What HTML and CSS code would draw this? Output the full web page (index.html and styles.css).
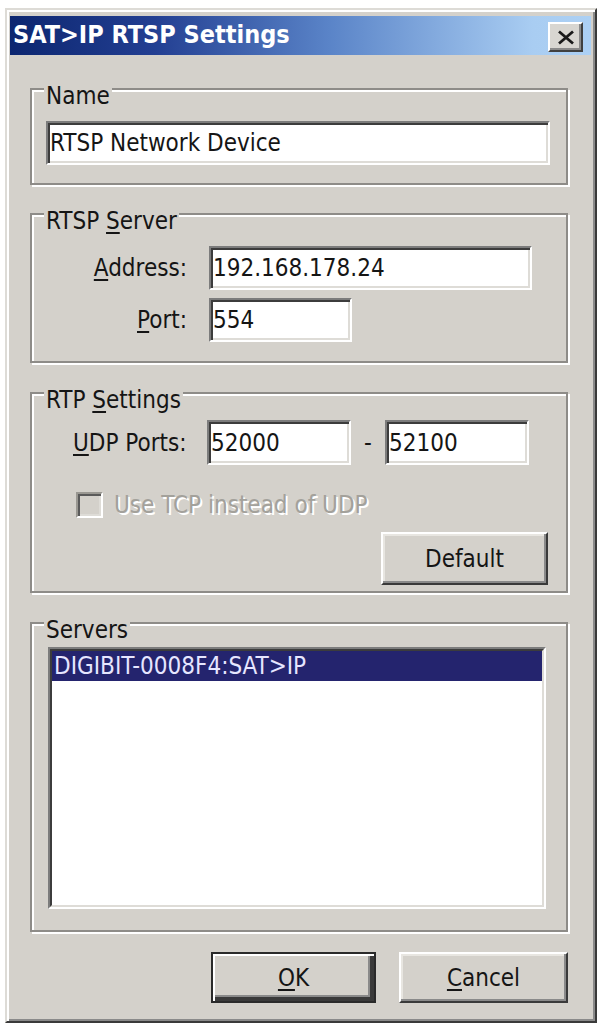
FILE: index.html
```html
<!DOCTYPE html>
<html>
<head>
<meta charset="utf-8">
<title>SAT&gt;IP RTSP Settings</title>
<link rel="stylesheet" href="styles.css">
</head>
<body>
<div class="window">
  <div class="titlebar">
    <span class="title-text">SAT&gt;IP RTSP Settings</span>
    <button class="close" aria-label="Close">
      <svg width="18" height="15" viewBox="0 0 18 15"><path d="M2 1.5 L16 13.5 M16 1.5 L2 13.5" stroke="#1a1a1a" stroke-width="2.8" fill="none"/></svg>
    </button>
  </div>
  <div class="content">
    <fieldset class="group g-name">
      <legend>Name</legend>
      <input class="field f-name" type="text" value="RTSP Network Device">
    </fieldset>

    <fieldset class="group g-server">
      <legend>RTSP <u>S</u>erver</legend>
      <div class="row">
        <label class="lbl-right"><u>A</u>ddress:</label>
        <input class="field f-addr" type="text" value="192.168.178.24">
      </div>
      <div class="row row-port">
        <label class="lbl-right"><u>P</u>ort:</label>
        <input class="field f-port" type="text" value="554">
      </div>
    </fieldset>

    <fieldset class="group g-rtp">
      <legend>RTP <u>S</u>ettings</legend>
      <div class="row row-udp">
        <label class="lbl-udp"><u>U</u>DP Ports:</label>
        <input class="field f-udp" type="text" value="52000">
        <span class="dash">-</span>
        <input class="field f-udp" type="text" value="52100">
      </div>
      <div class="row row-check">
        <span class="checkbox"></span>
        <span class="check-label">Use TCP instead of UDP</span>
      </div>
      <div class="row row-default">
        <button class="btn btn-default">Default</button>
      </div>
    </fieldset>

    <fieldset class="group g-servers">
      <legend>Servers</legend>
      <div class="list">
        <div class="list-inner">
          <div class="list-item selected">DIGIBIT-0008F4:SAT&gt;IP</div>
        </div>
      </div>
    </fieldset>

    <div class="buttons">
      <button class="btn btn-ok"><u>O</u>K</button>
      <button class="btn btn-cancel"><u>C</u>ancel</button>
    </div>
  </div>
</div>
</body>
</html>
```

FILE: styles.css
```css
* { box-sizing: border-box; }
html, body { margin: 0; padding: 0; background: #ffffff; }
body {
  font-family: "DejaVu Sans Condensed", "DejaVu Sans", sans-serif;
  font-size: 24px;
  line-height: 26px;
  color: #151515;
}
u { text-decoration-thickness: 2px; text-underline-offset: 3px; }

.window {
  width: 592px;
  height: 1015px;
  margin: 8px 0 0 5px;
  background: #d4d1cb;
  border: 2px solid;
  border-color: #dddbd6 #3a3a3a #3a3a3a #dddbd6;
  box-shadow: inset 2px 2px #ffffff, inset -2px -2px #8a8a8a;
  padding: 6px 4px 4px 3px;
  display: flex;
  flex-direction: column;
}

.titlebar {
  height: 39px;
  display: flex;
  align-items: flex-start;
  background: linear-gradient(to right, #0c2670 0%, #233f92 25%, #5a84c8 55%, #a9cdf2 90%, #acd0f4 100%);
}
.title-text {
  flex: 1;
  padding: 5px 0 0 3px;
  color: #ffffff;
  font-weight: bold;
  font-size: 25px;
  line-height: 28px;
}
.close {
  width: 35px;
  height: 30px;
  margin: 6px 8px 0 0;
  padding: 0;
  background: #d8d6d1;
  border: 2px solid;
  border-color: #ffffff #404040 #404040 #ffffff;
  box-shadow: inset -2px -2px #8a8a8a;
  display: flex;
  align-items: center;
  justify-content: center;
}

.content {
  padding-left: 20px;
  display: flex;
  flex-direction: column;
}

.group {
  width: 538px;
  min-width: 0;
  margin: 0;
  padding: 0;
  border: 2px solid #8e8c88;
  box-shadow: inset 2px 2px #ffffff, 2px 2px #ffffff;
}
.group legend {
  margin-left: 12px;
  padding: 14px 2px 0 2px;
  line-height: 26px;
  background: #d4d1cb;
}

.g-name { margin-top: 14px; padding: 12px 0 18px 0; }
.g-server { margin-top: 9px; padding: 12px 0 19px 0; }
.g-rtp { margin-top: 10px; padding: 7px 0 6px 0; }
.g-servers { margin-top: 10px; padding: 4px 0 21px 0; }

.field {
  height: 44px;
  margin: 0;
  padding: 0 2px;
  font-family: inherit;
  font-size: 24px;
  color: #151515;
  background: #ffffff;
  border: 2px solid;
  border-color: #7c7c7c #ffffff #ffffff #7c7c7c;
  box-shadow: inset 2px 2px #3c3c3c, inset -2px -2px #dedcd7;
  outline: none;
}
.f-name { width: 504px; margin-left: 14px; }
.f-addr { width: 323px; }
.f-port { width: 143px; }
.f-udp { width: 144px; height: 45px; }

.row { display: flex; align-items: center; }
.row-port { margin-top: 8px; }
.lbl-right { width: 155px; text-align: right; margin-right: 22px; }

.lbl-udp { width: 134px; margin-left: 41px; }
.dash { width: 34px; text-align: center; }

.row-check { margin-top: 27px; height: 26px; }
.checkbox {
  width: 27px;
  height: 26px;
  margin-left: 44px;
  background: #d4d1cb;
  border: 2px solid;
  border-color: #9a9892 #ffffff #ffffff #9a9892;
  box-shadow: inset 2px 2px #5a5a5a, inset -2px -2px #dedcd7;
}
.check-label {
  margin-left: 11px;
  color: #a3a19b;
  text-shadow: 2px 2px #ffffff;
}

.row-default { justify-content: flex-end; margin-top: 14px; }

.btn {
  margin: 0;
  padding: 0;
  font-family: inherit;
  font-size: 24px;
  line-height: 26px;
  color: #151515;
  background: #d4d1cb;
  border: 2px solid;
  border-color: #ffffff #3a3a3a #3a3a3a #ffffff;
  box-shadow: inset -2px -2px #8a8a8a, inset 2px 2px #e8e6e1;
}
.btn-default { width: 167px; height: 53px; margin-right: 18px; }

.list {
  width: 498px;
  height: 262px;
  margin-left: 16px;
  border: 2px solid;
  border-color: #7c7c7c #ffffff #ffffff #7c7c7c;
}
.list-inner {
  height: 100%;
  background: #ffffff;
  border: 2px solid;
  border-color: #3c3c3c #dedcd7 #dedcd7 #3c3c3c;
}
.list-item {
  height: 30px;
  line-height: 30px;
  padding-left: 2px;
}
.list-item.selected {
  background: #24246e;
  color: #e6e6ff;
}

.buttons {
  width: 538px;
  margin-top: 20px;
  display: flex;
  justify-content: flex-end;
  gap: 23px;
}
.btn-ok {
  width: 165px;
  height: 51px;
  border-color: #2a2a2a;
  box-shadow: inset 2px 2px #ffffff, inset -4px -4px #3a3a3a, inset -6px -6px #8a8a8a;
}
.btn-cancel { width: 169px; height: 51px; }
```
